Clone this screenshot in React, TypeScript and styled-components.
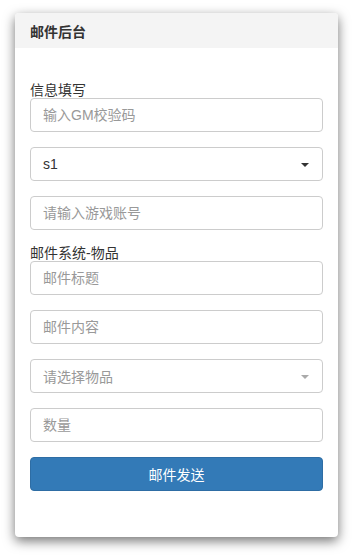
import styled, { createGlobalStyle } from 'styled-components';

const GlobalStyle = createGlobalStyle`
  html, body {
    margin: 0;
    padding: 0;
    background: #fff;
  }
  body {
    font-family: "Liberation Sans", "Noto Sans CJK SC", Arial, sans-serif;
    font-size: 14px;
    color: #333;
  }
`;

const Page = styled.div`
  padding: 13px 14px 18px 15px;
`;

const Card = styled.div`
  width: 323px;
  box-sizing: border-box;
  background: #fff;
  border-radius: 4px;
  overflow: hidden;
  box-shadow: 0 4px 12px rgba(0, 0, 0, 0.55);
`;

const Header = styled.div`
  height: 35px;
  box-sizing: border-box;
  padding: 0 15px;
  display: flex;
  align-items: center;
  background: #f4f4f4;
  font-weight: bold;
  font-size: 14px;
  color: #333;
`;

const Body = styled.div`
  padding: 34px 15px 46px;
  display: flex;
  flex-direction: column;
`;

const Label = styled.div`
  height: 16px;
  line-height: 16px;
  font-size: 14px;
  color: #333;
`;

const Group = styled.div`
  margin-bottom: 15px;
`;

const Input = styled.input`
  display: block;
  width: 100%;
  height: 34px;
  box-sizing: border-box;
  padding: 6px 12px;
  border: 1px solid #ccc;
  border-radius: 4px;
  font-family: inherit;
  font-size: 14px;
  color: #555;
  background: #fff;
  outline: none;

  &::placeholder {
    color: #999;
  }
`;

const SelectBox = styled.div<{ $muted?: boolean }>`
  position: relative;
  height: 34px;
  box-sizing: border-box;
  padding: 0 12px;
  display: flex;
  align-items: center;
  border: 1px solid #ccc;
  border-radius: 4px;
  color: ${({ $muted }) => ($muted ? '#999' : '#333')};
  background: #fff;

  &::after {
    content: '';
    position: absolute;
    right: 13px;
    top: 15px;
    border-left: 4px solid transparent;
    border-right: 4px solid transparent;
    border-top: 4px solid ${({ $muted }) => ($muted ? '#aaa' : '#333')};
  }
`;

const Button = styled.button`
  display: block;
  width: 100%;
  height: 34px;
  border: 1px solid #2e6da4;
  border-radius: 4px;
  background: #337ab7;
  color: #fff;
  font-family: inherit;
  font-size: 14px;
  cursor: pointer;
`;

export default function App() {
  return (
    <Page>
      <GlobalStyle />
      <Card>
        <Header>邮件后台</Header>
        <Body>
          <Label>信息填写</Label>
          <Group>
            <Input placeholder="输入GM校验码" />
          </Group>
          <Group>
            <SelectBox>s1</SelectBox>
          </Group>
          <Group>
            <Input placeholder="请输入游戏账号" />
          </Group>
          <Label>邮件系统-物品</Label>
          <Group>
            <Input placeholder="邮件标题" />
          </Group>
          <Group>
            <Input placeholder="邮件内容" />
          </Group>
          <Group>
            <SelectBox $muted>请选择物品</SelectBox>
          </Group>
          <Group>
            <Input placeholder="数量" />
          </Group>
          <Button>邮件发送</Button>
        </Body>
      </Card>
    </Page>
  );
}
